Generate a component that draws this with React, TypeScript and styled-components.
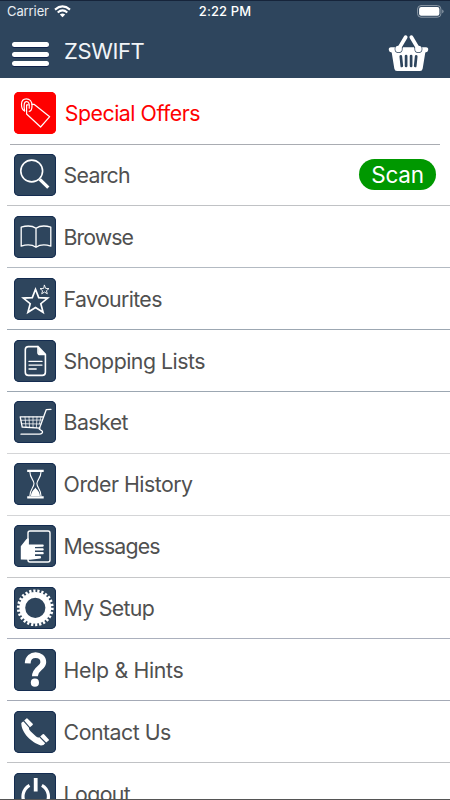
import React from "react";
import styled, { createGlobalStyle } from "styled-components";

const NAVY = "#2e455d";

const GlobalStyle = createGlobalStyle`
  * { box-sizing: border-box; }
  html, body { margin: 0; padding: 0; background: #fff; overflow: hidden; }
  body { font-family: Inter, "Liberation Sans", sans-serif; }
`;

const Screen = styled.div`
  width: 450px;
  height: 800px;
  overflow: hidden;
  display: flex;
  flex-direction: column;
  background: #fff;
  border-bottom: 1px solid #555;
`;

const Header = styled.header`
  flex: none;
  height: 78px;
  background: ${NAVY};
  border-top: 1px solid #16243a;
  color: #fff;
`;

const StatusBar = styled.div`
  height: 20px;
  display: grid;
  grid-template-columns: 1fr auto 1fr;
  align-items: center;
  padding: 0 6px 0 7px;
`;

const Carrier = styled.div`
  display: flex;
  align-items: center;
  gap: 5px;
  font-size: 13px;
  letter-spacing: -0.1px;
  color: #e8edf2;
`;

const Clock = styled.div`
  font-size: 13px;
  font-weight: 500;
  letter-spacing: 0.12px;
  margin-right: 1px;
`;

const BatterySlot = styled.div`
  display: flex;
  justify-content: flex-end;
`;

const NavBar = styled.div`
  height: 57px;
  display: flex;
  align-items: center;
  padding: 2px 21px 0 12px;
`;

const MenuButton = styled.div`
  width: 37px;
  height: 24px;
  margin-top: 7px;
  display: flex;
  flex-direction: column;
  justify-content: space-between;
`;

const MenuBar = styled.span`
  height: 5px;
  border-radius: 3px;
  background: #fff;
  box-shadow: 0 1px 0 #10224a;
`;

const Title = styled.h1`
  flex: 1;
  margin: 1px 0 0 15px;
  font-size: 22px;
  line-height: 28px;
  font-weight: 400;
  letter-spacing: -0.4px;
  color: #f1f4f7;
`;

const List = styled.main`
  flex: 1;
  overflow: hidden;
  padding-top: 4.65px;
`;

const Row = styled.div<{ $inset?: boolean; $line: string }>`
  height: 61.87px;
  display: flex;
  align-items: center;
  margin-left: ${(p) => (p.$inset ? 10 : 7)}px;
  margin-right: ${(p) => (p.$inset ? 10 : 0)}px;
  padding-left: ${(p) => (p.$inset ? 4 : 7)}px;
  padding-right: 14px;
  border-bottom: 1px solid ${(p) => p.$line};
`;

const Tile = styled.div<{ $color: string }>`
  flex: none;
  width: 42px;
  height: 42px;
  border-radius: 5px;
  background: ${(p) => p.$color};
  box-shadow: inset 0 0 0 1px ${(p) => (p.$color === NAVY ? "#142c50" : p.$color)};
`;

const Label = styled.span<{ $color: string; $spacing: number; $offset: number }>`
  flex: 1;
  margin-left: ${(p) => p.$offset}px;
  font-size: 21.3px;
  line-height: 28px;
  letter-spacing: ${(p) => p.$spacing}px;
  color: ${(p) => p.$color};
  white-space: nowrap;
`;

const ScanButton = styled.button`
  width: 77px;
  height: 31px;
  padding: 0;
  border: 0;
  border-radius: 16px;
  background: #009800;
  color: #fff;
  font: 400 22.5px/32px Inter, "Liberation Sans", sans-serif;
  letter-spacing: -0.2px;
`;

const Glyph = styled.svg`
  display: block;
  width: 42px;
  height: 42px;
  fill: none;
  stroke: #fff;
  stroke-width: 1.3;
  stroke-linejoin: round;
  stroke-linecap: round;
`;

const icons: Record<string, React.ReactNode> = {
  tag: (
    <g strokeWidth="1.2">
      <path d="M18 12.3H20L35.7 24.7 26.6 35 12.6 22V12.9H14.2" />
      <path d="M10.6 18.9C8.5 17.8 7.5 15.3 7.5 12.4 7.5 9 9.6 6.9 12.4 6.9 15.7 6.9 18 9.6 18 13.5 18 17 17 19.3 15.2 19.3" />
      <path d="M10.6 18.9C9.6 13.5 10 9.7 12.4 9.7 14.9 9.7 15.8 12.5 15.2 16.2" />
    </g>
  ),
  search: (
    <g>
      <circle cx="17.7" cy="17" r="10.9" strokeWidth="1.6" />
      <path d="M25.8 25.3 34.3 33.7" strokeWidth="3.2" strokeLinecap="butt" />
    </g>
  ),
  book: (
    <path d="M22 12.3C18 9.5 12 9.7 7.2 11.2V30.2C12 28.6 18 28.5 22 31.3 26 28.5 32 28.6 36.8 30.2V11.2C32 9.7 26 9.5 22 12.3ZM22 12.3V31.3" />
  ),
  stars: (
    <g strokeLinejoin="miter">
      <path d="M21.5 11.3 24.7 19.6 33.7 20.1 26.8 25.7 29.1 34.3 21.5 29.5 13.9 34.3 16.2 25.7 9.3 20.1 18.3 19.6Z" strokeWidth="1.7" />
      <path d="M30.5 7.3 31.7 10.4 35 10.6 32.4 12.7 33.3 15.8 30.5 14 27.7 15.8 28.6 12.7 26 10.6 29.3 10.4Z" strokeWidth=".9" />
    </g>
  ),
  document: (
    <g>
      <path d="M24 6.6H14.5Q11.3 6.6 11.3 9.8V32.2Q11.3 35.4 14.5 35.4H28.2Q31.4 35.4 31.4 32.2V14.3L24 6.6V12.4Q24 14.4 26 14.4H31.4" strokeWidth="1.6" />
      <path d="M24.5 7.5 30.5 14H26Q24.5 14 24.5 12.5Z" fill="#fff" stroke="none" />
      <path d="M15 21.4H28M15 25.1H28M15 29H22.2" strokeWidth="1.3" />
    </g>
  ),
  cart: (
    <g strokeWidth="1.3">
      <path d="M37 8.3 32.2 8.7 25.2 28 28.4 30.2C29 31.8 27.5 33.2 25.5 33.2H7M6.2 15.8H29.2M6.2 15.8 8.2 26 26 27.2" />
      <path d="M7 19.3 28 19M7.6 22.7 27 23M11 16 12 26M15 16 15.5 26M19 16V26.5M23 16 22.4 26.5M27 16 25.4 23" strokeWidth=".75" />
    </g>
  ),
  hourglass: (
    <g>
      <path d="M13.2 7.8H29.7M13.2 34.3H29.7" strokeWidth="2.3" strokeLinecap="butt" />
      <path d="M15.9 9C15.9 15 20 17 20 20.5 20 24.5 15.9 26 15.9 33M27 9C27 15 22.9 17 22.9 20.5 22.9 24.5 27 26 27 33" strokeWidth="1.1" />
      <path d="M17 33C17 28.5 20 27 21.4 24.5 22.8 27 25.9 28.5 25.9 33Z" fill="#fff" stroke="none" />
    </g>
  ),
  hand: (
    <g>
      <rect x="14" y="6" width="22" height="31" rx="2" strokeWidth="1.4" />
      <path d="M6.8 21.3 12.3 14.2Q15 12 14.8 15L14.6 19.5H29.2Q30.5 20.5 29.2 21.7L21 22V23.2H29.2Q30.5 24.5 29.2 25.5H21V27H29.2Q30.5 28.2 29.2 29.3H21V31H26.5Q27.8 32.2 26.5 33.4L16 34.8 6.8 34.6Z" fill="#fff" stroke="none" />
    </g>
  ),
  gear: (
    <g>
      <circle cx="21.3" cy="20.8" r="13" strokeWidth="5.8" />
      <circle cx="21.3" cy="20.8" r="16.9" strokeWidth="3" strokeLinecap="butt" pathLength="104" strokeDasharray="2.2 1.8" />
    </g>
  ),
  help: (
    <g>
      <path d="M13.7 14.4C14 3 29.3 4.2 29.3 13.2 29.3 19.3 20.9 19.2 20.9 27.3" strokeWidth="5.8" strokeLinecap="butt" />
      <circle cx="20.9" cy="33.7" r="4.1" fill="#fff" stroke="none" />
    </g>
  ),
  phone: (
    <g fill="#fff" stroke="none">
      <path d="M7.3 12.1Q8.3 10.7 9.5 10.6L15 16.8Q14.4 18.1 16.5 20.2L22.1 25.4Q24 27 25.3 26.3L31.2 32.2Q29.8 34.5 26.8 34.4C18 32.2 7.2 21.8 7.3 12.1Z" />
      <path d="M10.2 9.6 12.4 7.5Q13.1 7 13.7 7.7L18.7 12.8Q19.2 13.5 18.6 14.1L16 16.2ZM26.2 25.4 28.7 23.2Q29.4 22.7 30 23.3L34.8 28.4Q35.3 29 34.7 29.6L32.2 31.6Z" />
    </g>
  ),
  power: (
    <g strokeLinecap="butt">
      <path d="M15.5 12.3A12.7 12.7 0 1 0 27.9 12.3" strokeWidth="3.2" />
      <path d="M21.7 5V18.5" strokeWidth="3.8" />
    </g>
  ),
};

type Item = {
  icon: string;
  label: string;
  line: string;
  spacing: number;
  special?: boolean;
  scan?: boolean;
};

const items: Item[] = [
  { icon: "tag", label: "Special Offers", line: "#a9acb2", spacing: -0.46, special: true },
  { icon: "search", label: "Search", line: "#c0c2c5", spacing: -0.72, scan: true },
  { icon: "book", label: "Browse", line: "#b3bac2", spacing: -0.95 },
  { icon: "stars", label: "Favourites", line: "#9ca7b2", spacing: -0.64 },
  { icon: "document", label: "Shopping Lists", line: "#9ca7b2", spacing: -0.5 },
  { icon: "cart", label: "Basket", line: "#d4d5d7", spacing: -0.56 },
  { icon: "hourglass", label: "Order History", line: "#d4d5d7", spacing: -0.5 },
  { icon: "hand", label: "Messages", line: "#c6c7c9", spacing: -0.85 },
  { icon: "gear", label: "My Setup", line: "#abb0bd", spacing: -0.68 },
  { icon: "help", label: "Help & Hints", line: "#a4aab6", spacing: -0.32 },
  { icon: "phone", label: "Contact Us", line: "#c0c2c5", spacing: -0.5 },
  { icon: "power", label: "Logout", line: "#c0c2c5", spacing: -0.6 },
];

const WifiIcon = () => (
  <svg width="17" height="13" viewBox="0 0 17 13" fill="none" stroke="#fff" strokeWidth="2.1">
    <path d="M1 4.6Q8.5-1.8 16 4.6M3.7 7.5Q8.5 3.4 13.3 7.5" />
    <path d="M5.8 9.4Q8.5 7.4 11.2 9.4L8.5 12.2Z" fill="#fff" stroke="none" />
  </svg>
);

const BatteryIcon = () => (
  <svg width="27" height="13" viewBox="0 0 27 13">
    <rect x=".6" y=".6" width="23.3" height="11.6" rx="3.4" fill="none" stroke="#8c99a6" />
    <rect x="2.1" y="2.1" width="20.3" height="8.6" rx="2" fill="#fff" />
    <path d="M25.2 4.5Q26.6 5.2 26.6 6.4T25.2 8.4Z" fill="#8c99a6" />
  </svg>
);

const BasketDrawing = styled.svg`
  display: block;
  width: 41px;
  height: 37px;
  margin-top: 5px;
`;

const BasketIcon = () => (
  <BasketDrawing viewBox="0 0 41 37">
    <path d="M3 12.3H38Q40.5 12.5 40.2 15 40 17 37.3 17.5L34.7 33.5Q34.3 36 32 36H9Q6.7 36 6.3 33.5L3.7 17.5Q1 17 .8 15 .5 12.5 3 12.3Z" fill="#fff" />
    <path d="M10.5 14.5 17.5 2.5M30.5 14.5 23.5 2.5" fill="none" stroke={NAVY} strokeWidth="5.4" strokeLinecap="round" />
    <circle cx="10.6" cy="14" r="4" fill={NAVY} />
    <circle cx="30.4" cy="14" r="4" fill={NAVY} />
    <path d="M10.5 14.3 17.6 2.2M30.5 14.3 23.4 2.2" fill="none" stroke="#fff" strokeWidth="3.7" strokeLinecap="round" />
    <circle cx="10.6" cy="14" r="3.3" fill="#fff" />
    <circle cx="30.4" cy="14" r="3.3" fill="#fff" />
    <path d="M12.8 21.3 13.8 31M18.1 21V31M23.1 21V31M28.2 21.3 27.2 31" stroke={NAVY} strokeWidth="2.7" strokeLinecap="round" />
  </BasketDrawing>
);

export default function App() {
  return (
    <>
      <GlobalStyle />
      <Screen>
        <Header>
          <StatusBar>
            <Carrier>
              Carrier
              <WifiIcon />
            </Carrier>
            <Clock>2:22 PM</Clock>
            <BatterySlot>
              <BatteryIcon />
            </BatterySlot>
          </StatusBar>
          <NavBar>
            <MenuButton aria-label="Menu">
              <MenuBar />
              <MenuBar />
              <MenuBar />
            </MenuButton>
            <Title>ZSWIFT</Title>
            <BasketIcon />
          </NavBar>
        </Header>
        <List>
          {items.map((item) => (
            <Row key={item.label} $inset={item.special} $line={item.line}>
              <Tile $color={item.special ? "#ff0000" : NAVY}>
                <Glyph viewBox="0 0 42 42">{icons[item.icon]}</Glyph>
              </Tile>
              <Label
                $color={item.special ? "#ff0000" : "#505050"}
                $spacing={item.spacing}
                $offset={item.special ? 8.7 : 7.6}
              >
                {item.label}
              </Label>
              {item.scan && <ScanButton>Scan</ScanButton>}
            </Row>
          ))}
        </List>
      </Screen>
    </>
  );
}
